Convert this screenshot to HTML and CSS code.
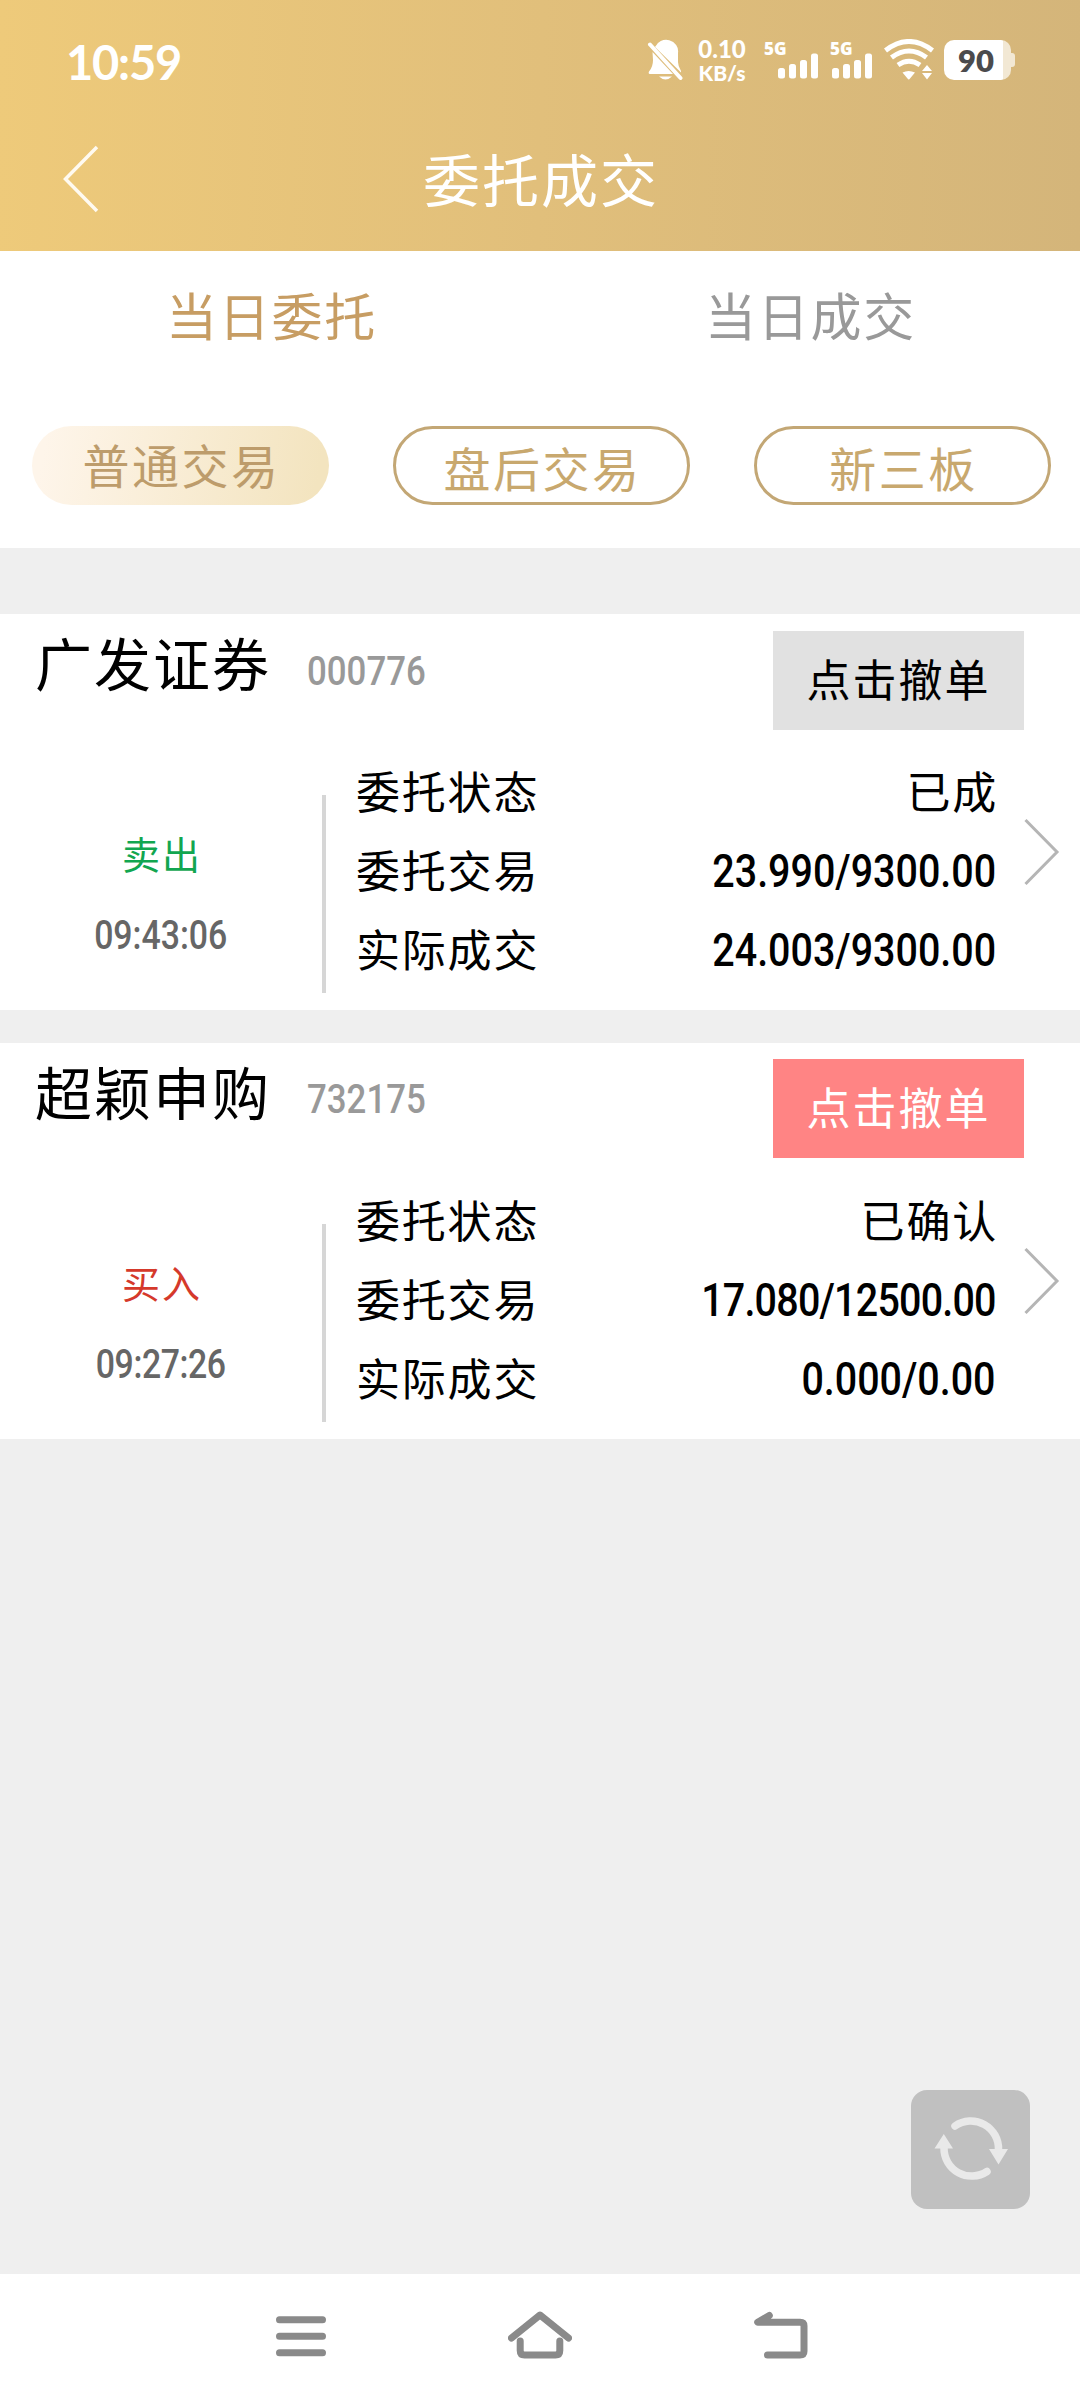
FILE: index.html
```html
<!DOCTYPE html>
<html lang="zh-CN">
<head>
<meta charset="utf-8">
<title>委托成交</title>
<link rel="stylesheet" href="styles.css">
</head>
<body>
<div class="screen">
  <header class="top">
    <div class="status">
      <span class="clock">10:59</span>
      <svg class="bell" width="36" height="42" viewBox="0 0 36 42">
        <path fill="#fff" d="M8 8 A12 11.500 0 0 1 31 14 V23 Q31 27 34 32 L34 33.500 Z M5.500 13 L26 35 H3 Q1 35 2 32.500 Q6 28 6 21 Z M12 37.500 H25 Q18.500 43.500 12 37.500 Z"/>
        <path d="M3 5.500 L33.500 39" stroke="#fff" stroke-width="4" stroke-linecap="round"/>
      </svg>
      <span class="speed"><b>0.10</b><b class="unit">KB/s</b></span>
      <span class="signal first"><b>5G</b>
        <svg width="41" height="26" viewBox="0 0 41 26" fill="#fff"><rect y="15" width="7" height="10.500" rx="2.500"/><rect x="11" y="11" width="7" height="14.500" rx="2.500"/><rect x="22" y="7" width="7" height="18.500" rx="2.500"/><rect x="33" y="0.500" width="7" height="25" rx="2.500"/></svg>
      </span>
      <span class="signal second"><b>5G</b>
        <svg width="41" height="26" viewBox="0 0 41 26" fill="#fff"><rect y="15" width="7" height="10.500" rx="2.500"/><rect x="11" y="11" width="7" height="14.500" rx="2.500"/><rect x="22" y="7" width="7" height="18.500" rx="2.500"/><rect x="33" y="0.500" width="7" height="25" rx="2.500"/></svg>
      </span>
      <svg class="wifi" width="50" height="42" viewBox="0 0 50 42">
        <g fill="none" stroke="#fff" stroke-width="5">
          <path d="M1.500 11.500 Q25 -6.500 48.500 11.500"/>
          <path d="M7.500 18.500 Q25 5.500 42.500 18.500"/>
          <path d="M14 26 Q25 18.500 36 26"/>
        </g>
        <path fill="#fff" d="M18.500 33.500 Q24.500 30.500 31 33.500 L26 39.500 Q24.800 41.500 23.500 39.500 Z M43 26 L48 32 H38 Z M38 34 H48 L43 40.500 Z"/>
      </svg>
      <span class="battery"><b>90</b></span>
    </div>
    <div class="titlebar">
      <svg class="back" width="36" height="68" viewBox="0 0 36 68"><path d="M34 2 L2.500 34 L34 66" fill="none" stroke="#fffaf0" stroke-width="3.500"/></svg>
      <h1 class="title">委托成交</h1>
      <span class="spacer"></span>
    </div>
  </header>

  <section class="filters">
    <nav class="tabs">
      <span class="tab active">当日委托</span>
      <span class="tab">当日成交</span>
    </nav>
    <div class="pills">
      <span class="pill selected">普通交易</span>
      <span class="pill">盘后交易</span>
      <span class="pill">新三板</span>
    </div>
  </section>

  <main class="orders">
    <article class="card">
      <div class="head">
        <h2 class="name">广发证券</h2>
        <span class="code">000776</span>
        <span class="cancel">点击撤单</span>
      </div>
      <div class="body">
        <div class="side"><span class="sell">卖出</span><span class="time">09:43:06</span></div>
        <div class="rule"></div>
        <dl class="details">
          <div class="row"><dt>委托状态</dt><dd>已成</dd></div>
          <div class="row"><dt>委托交易</dt><dd class="num">23.990/9300.00</dd></div>
          <div class="row"><dt>实际成交</dt><dd class="num">24.003/9300.00</dd></div>
        </dl>
        <svg class="chevron" width="36" height="68" viewBox="0 0 36 68"><path d="M1.500 2 L33 34 L1.500 66" fill="none" stroke="#b5b5b5" stroke-width="3"/></svg>
      </div>
    </article>
    <article class="card pending">
      <div class="head">
        <h2 class="name">超颖申购</h2>
        <span class="code">732175</span>
        <span class="cancel enabled">点击撤单</span>
      </div>
      <div class="body">
        <div class="side"><span class="buy">买入</span><span class="time tight">09:27:26</span></div>
        <div class="rule"></div>
        <dl class="details">
          <div class="row"><dt>委托状态</dt><dd>已确认</dd></div>
          <div class="row"><dt>委托交易</dt><dd class="num tight">17.080/12500.00</dd></div>
          <div class="row"><dt>实际成交</dt><dd class="num">0.000/0.00</dd></div>
        </dl>
        <svg class="chevron" width="36" height="68" viewBox="0 0 36 68"><path d="M1.500 2 L33 34 L1.500 66" fill="none" stroke="#b5b5b5" stroke-width="3"/></svg>
      </div>
    </article>
    <div class="refresh">
      <svg width="119" height="119" viewBox="0 0 119 119">
        <g fill="none" stroke="#e9e9e9" stroke-width="7.500" stroke-linecap="round">
          <path d="M44 36 A27.700 27.700 0 0 1 87.500 60"/>
          <path d="M76 81.500 A27.700 27.700 0 0 1 33 58"/>
        </g>
        <path fill="#e9e9e9" d="M78 59 H97 L87.500 74.500 Z M23.500 58.500 H42 L32.800 44 Z"/>
      </svg>
    </div>
  </main>

  <footer class="navbar">
    <svg width="50" height="41" viewBox="0 0 50 41"><path d="M3.500 3.800 H46.500 M3.500 20.300 H46.500 M3.500 36.800 H46.500"/></svg>
    <svg width="64" height="48" viewBox="0 0 64 48"><path d="M3.500 27 L32 4 L60.500 27"/><path d="M12.200 32.500 V42 Q12.200 46.500 16.500 46.500 H47.500 Q51.800 46.500 51.800 42 V32.500" transform="translate(0 -2.500)"/></svg>
    <svg width="54" height="48" viewBox="0 0 54 48"><path d="M15.300 4.500 L3.700 11.300 H46 Q50 11.300 50 15 V40.300 Q50 44 46 44 H13.500"/></svg>
  </footer>
</div>
</body>
</html>
```
FILE: styles.css
```css
* { box-sizing: border-box; margin: 0; padding: 0; }

body {
  width: 1080px;
  font-family: "Noto Sans CJK SC", sans-serif;
  color: #000;
}

svg { display: block; flex: none; }

.screen {
  display: flex;
  flex-direction: column;
  width: 1080px;
  height: 2400px;
  background: #efefef;
}

/* Header */
.top {
  height: 251px;
  background: linear-gradient(91deg, #eeca7a 0%, #e1bf7b 50%, #d4b57a 100%);
  color: #fff;
}

.status {
  display: flex;
  align-items: flex-start;
  height: 120px;
  padding: 39px 66px 0 66px;
}

.clock {
  width: 581px;
  margin-top: -6px;
  font: 700 47px/58px Lato, sans-serif;
  letter-spacing: -1.200px;
}

.speed {
  display: flex;
  flex-direction: column;
  width: 50px;
  margin-left: 14px;
  font: 700 24px/25px Lato, sans-serif;
  text-align: center;
  margin-top: -3px;
}

.speed .unit { font-size: 21px; line-height: 24px; }

.signal { display: flex; align-items: flex-start; }
.signal b { width: 24px; font: 800 17px/20px "Open Sans", sans-serif; }
.signal svg { margin: 14px 0 0 -10px; }
.signal.first { margin-left: 17px; }
.signal.second { margin-left: 11px; }
.signal.second svg { margin-left: -22px; }

.wifi { margin-left: 11px; }

.battery {
  position: relative;
  width: 67px;
  height: 40px;
  margin: 1px 0 0 10px;
  border-radius: 10px;
  background: linear-gradient(90deg, #fff 59px, #f2e8d4 59px);
  color: #4b4b4d;
  text-align: center;
}

.battery b {
  display: block;
  width: 64px;
  font: 800 31px/40px Lato, sans-serif;
}

.battery::after {
  content: "";
  position: absolute;
  left: 67px;
  top: 13px;
  width: 4px;
  height: 14px;
  border-radius: 0 3px 3px 0;
  background: #f2e8d4;
}

.titlebar {
  display: flex;
  align-items: center;
  justify-content: space-between;
  height: 118px;
  padding: 0 61px 0 63px;
}

.title {
  font-size: 57px;
  font-weight: 400;
  line-height: 84px;
  letter-spacing: 2px;
  margin-top: -4px;
}

.spacer { width: 36px; }

/* Tabs and filters */
.filters { height: 297px; background: #fff; }

.tabs { display: flex; padding: 23px 0 0 2px; }

.tab {
  flex: 1;
  height: 152px;
  font-size: 51px;
  line-height: 80px;
  letter-spacing: 1.800px;
  text-align: center;
  color: #999;
}

.tab.active { color: #c79d63; }

.pills { display: flex; justify-content: space-between; padding: 0 29px 0 32px; }

.pill {
  width: 297px;
  height: 79px;
  border: 3px solid #c3a775;
  border-radius: 40px;
  font-size: 47px;
  line-height: 75px;
  letter-spacing: 2.500px;
  text-indent: 2px;
  text-align: center;
  color: #c8a86e;
}

.pill.selected {
  border: 0;
  background: linear-gradient(100deg, #fef5ea 5%, #f3e4bf 95%);
  color: #bd9c6b;
}

/* Orders */
.orders { position: relative; flex: 1; padding-top: 66px; }

.card { height: 396px; margin-bottom: 33px; background: #fff; }

.head {
  display: flex;
  align-items: flex-start;
  height: 135px;
  padding: 17px 56px 0 35px;
}

.pending .head { padding-top: 16px; }

.name {
  margin-top: -1px;
  font-size: 57px;
  font-weight: 400;
  line-height: 62px;
  letter-spacing: 2px;
}

.pending .name { margin-top: 0; }

.code, .time, .num { font-family: Roboto, sans-serif; font-weight: 500; }

.code {
  flex: 1;
  margin: 16px 0 0 36px;
  font-size: 41px;
  line-height: 48px;
  color: #999;
  transform: scaleX(0.85);
  transform-origin: 0 50%;
}

.cancel {
  width: 251px;
  height: 99px;
  background: #e1e1e1;
  font-size: 44px;
  line-height: 95px;
  letter-spacing: 2px;
  text-align: center;
}

.cancel.enabled { background: #ff8484; color: #fff; }

.body { display: flex; }

.side {
  display: flex;
  flex-direction: column;
  align-items: center;
  width: 322px;
  padding-top: 64px;
}

.sell, .buy { font-size: 38px; line-height: 79px; letter-spacing: 2px; text-indent: 2px; }
.sell { color: #12a650; }
.buy { color: #d5392b; }

.time {
  font-size: 41px;
  line-height: 87px;
  color: #666;
  transform: scaleX(0.825);
}

.time.tight { letter-spacing: -0.500px; }

.rule { width: 4px; height: 198px; margin-top: 46px; background: #d6d6d6; }

.details { width: 642px; margin: 2px 0 0 30px; }

.row {
  display: flex;
  justify-content: space-between;
  height: 79px;
  font-size: 44px;
  line-height: 79px;
  letter-spacing: 1.800px;
}

.row .num {
  margin-right: 2px;
  font-size: 46px;
  line-height: 83px;
  letter-spacing: 0;
  transform: scaleX(0.857);
  transform-origin: 100% 50%;
}

.row .num.tight { letter-spacing: -0.900px; }

.chevron { margin: 69px 0 0 26px; }

.refresh {
  position: absolute;
  left: 911px;
  top: 1542px;
  width: 119px;
  height: 119px;
  border-radius: 16px;
  background: #c0c0c0;
}

/* System navigation */
.navbar {
  display: flex;
  justify-content: space-between;
  align-items: center;
  height: 126px;
  padding: 0 272px 1px 276px;
  background: #fff;
}

.navbar svg {
  fill: none;
  stroke: #8a8a8a;
  stroke-width: 7;
  stroke-linecap: round;
  stroke-linejoin: round;
}

.navbar svg + svg { margin-bottom: 3px; }
```
